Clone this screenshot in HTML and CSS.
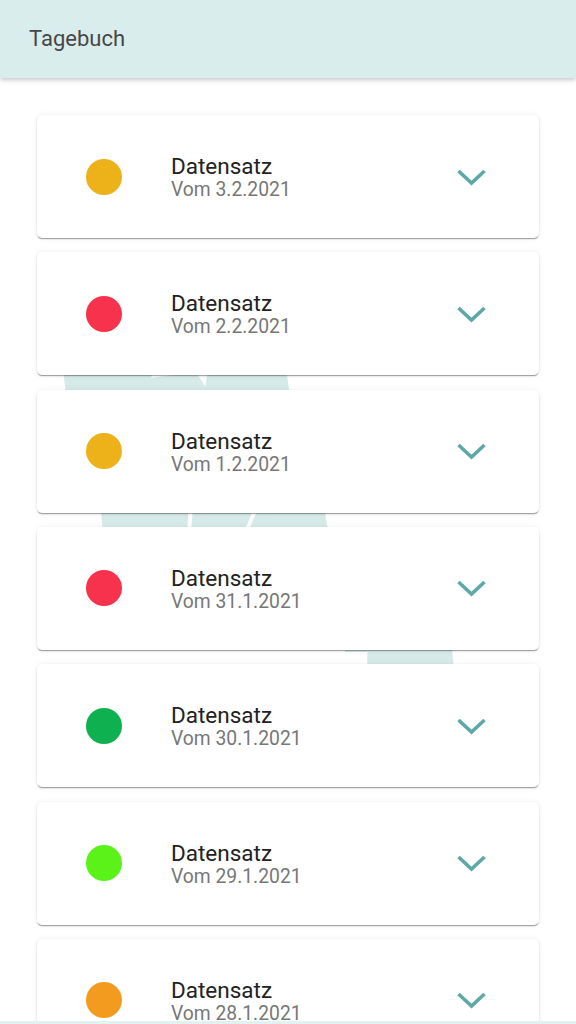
FILE: index.html
```html
<!DOCTYPE html>
<html lang="de">
<head>
<meta charset="utf-8">
<title>Tagebuch</title>
<link rel="stylesheet" href="styles.css">
</head>
<body>
<header class="appbar">
  <h1 class="appbar-title">Tagebuch</h1>
</header>
<main class="content">
  <svg class="backdrop" width="576" height="1024" viewBox="0 0 576 1024" aria-hidden="true">
    <g fill="#d5eae9">
      <polygon points="58,330 170,325 146,392 66,394"/>
      <polygon points="150,378 196,372 210,394 137,394"/>
      <polygon points="214,330 282,340 290,396 204,394"/>
      <polygon points="98,480 190,490 187,532 103,532"/>
      <polygon points="194,495 258,498 244,532 191,532"/>
      <polygon points="264,495 322,492 328,532 248,532"/>
      <polygon points="345,635 367,640 367,652 345,652"/>
      <polygon points="368,630 450,628 454,670 367,670"/>
    </g>
  </svg>
  <ul class="list">
    <li class="card"><span class="dot dot-yellow"></span><div class="meta"><div class="title">Datensatz</div><div class="date">Vom 3.2.2021</div></div><svg class="chev" viewBox="0 0 30 18"><polyline points="2,3 15,15 28,3"/></svg></li>
    <li class="card"><span class="dot dot-red"></span><div class="meta"><div class="title">Datensatz</div><div class="date">Vom 2.2.2021</div></div><svg class="chev" viewBox="0 0 30 18"><polyline points="2,3 15,15 28,3"/></svg></li>
    <li class="card"><span class="dot dot-yellow"></span><div class="meta"><div class="title">Datensatz</div><div class="date">Vom 1.2.2021</div></div><svg class="chev" viewBox="0 0 30 18"><polyline points="2,3 15,15 28,3"/></svg></li>
    <li class="card"><span class="dot dot-red"></span><div class="meta"><div class="title">Datensatz</div><div class="date">Vom 31.1.2021</div></div><svg class="chev" viewBox="0 0 30 18"><polyline points="2,3 15,15 28,3"/></svg></li>
    <li class="card"><span class="dot dot-green"></span><div class="meta"><div class="title">Datensatz</div><div class="date">Vom 30.1.2021</div></div><svg class="chev" viewBox="0 0 30 18"><polyline points="2,3 15,15 28,3"/></svg></li>
    <li class="card"><span class="dot dot-lime"></span><div class="meta"><div class="title">Datensatz</div><div class="date">Vom 29.1.2021</div></div><svg class="chev" viewBox="0 0 30 18"><polyline points="2,3 15,15 28,3"/></svg></li>
    <li class="card"><span class="dot dot-orange"></span><div class="meta"><div class="title">Datensatz</div><div class="date">Vom 28.1.2021</div></div><svg class="chev" viewBox="0 0 30 18"><polyline points="2,3 15,15 28,3"/></svg></li>
  </ul>
</main>
<div class="bottom-edge"></div>
</body>
</html>
```

FILE: styles.css
```css
* { box-sizing: border-box; }

html, body {
  margin: 0;
  padding: 0;
  height: 1024px;
  overflow: hidden;
  background: #ffffff;
  font-family: Roboto, "Liberation Sans", Arial, sans-serif;
}

.appbar {
  position: relative;
  z-index: 3;
  height: 78px;
  background: #d9eded;
  display: flex;
  align-items: center;
  padding-left: 29px;
  box-shadow: 0 2px 4px rgba(0, 0, 0, 0.18), 0 1px 10px rgba(0, 0, 0, 0.06);
}

.appbar-title {
  margin: 0;
  font-size: 22px;
  font-weight: 400;
  color: #474747;
  padding-bottom: 1px;
}

.content {
  position: relative;
  padding: 37px 37px 0 37px;
}

.backdrop {
  position: absolute;
  left: 0;
  top: -78px;
  z-index: 0;
}

.list {
  position: relative;
  z-index: 1;
  list-style: none;
  margin: 0;
  padding: 0;
  display: flex;
  flex-direction: column;
  gap: 14.33px;
}

.card {
  height: 123px;
  background: #ffffff;
  border-radius: 5px;
  display: flex;
  align-items: center;
  padding-left: 48.5px;
  padding-right: 52px;
  box-shadow: 0 2px 1px -1px rgba(0, 0, 0, 0.28), 0 1px 2px rgba(0, 0, 0, 0.16), 0 0 6px rgba(0, 0, 0, 0.06);
}

.dot {
  flex: none;
  width: 36px;
  height: 36px;
  border-radius: 50%;
}

.dot-yellow { background: #edb219; }
.dot-red { background: #f7324c; }
.dot-green { background: #0db14f; }
.dot-lime { background: #5af218; }
.dot-orange { background: #f39b1f; }

.meta {
  flex: 1;
  margin-left: 49.5px;
  padding-top: 3px;
}

.title {
  font-size: 22.5px;
  line-height: 24px;
  color: #222222;
}

.date {
  font-size: 19.3px;
  line-height: 24px;
  color: #777777;
}

.chev {
  flex: none;
  width: 31px;
  height: 18px;
  fill: none;
  stroke: #5ea8a6;
  stroke-width: 3.6;
  stroke-linecap: butt;
  stroke-linejoin: miter;
}

.bottom-edge {
  position: absolute;
  left: 0;
  right: 0;
  bottom: 0;
  height: 3px;
  background: #e3f1f0;
  z-index: 4;
}
```
